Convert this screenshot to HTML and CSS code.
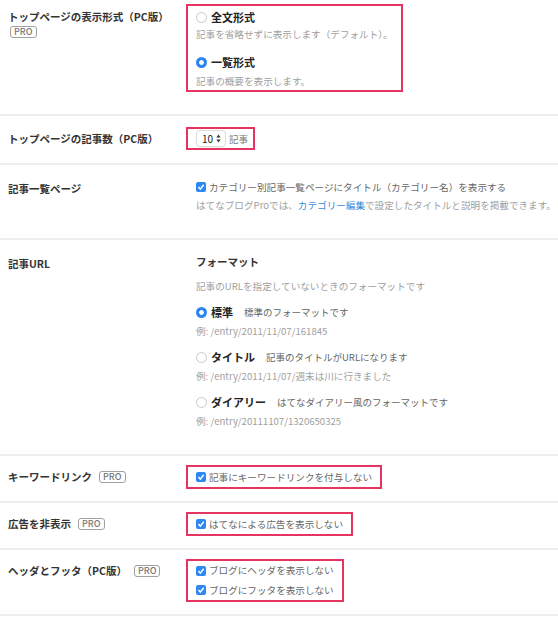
FILE: index.html
```html
<!DOCTYPE html>
<html lang="ja">
<head>
  <meta charset="UTF-8">
  <meta name="viewport" content="width=device-width, initial-scale=1.0">
  <title>詳細設定</title>
  <link rel="stylesheet" href="styles.css">
</head>
<body>

  <div class="settings">

    <!-- トップページの表示形式 -->
    <div class="row row-layout">
      <div class="label">
        トップページの表示形式（PC版）
        <span class="pro pro-block">PRO</span>
      </div>
      <div class="field mark layout-box">
        <div class="option"><span class="radio"></span><span class="opt-title">全文形式</span></div>
        <div class="note">記事を省略せずに表示します（デフォルト）。</div>
        <div class="option option-next"><span class="radio checked"></span><span class="opt-title">一覧形式</span></div>
        <div class="note note-after">記事の概要を表示します。</div>
      </div>
    </div>

    <!-- 記事数 -->
    <div class="row row-count">
      <div class="label">トップページの記事数（PC版）</div>
      <div class="field mark count-box">
        <span class="stepper">
          <span class="num">10</span>
          <svg class="arrows" viewBox="0 0 5 9"><path d="M2.5 0.5 L4.6 3.6 L0.4 3.6 Z M2.5 8.5 L4.6 5.4 L0.4 5.4 Z" fill="#333"/></svg>
        </span>
        <span class="unit">記事</span>
      </div>
    </div>

    <!-- 記事一覧ページ -->
    <div class="row">
      <div class="label">記事一覧ページ</div>
      <div class="field">
        <div class="check">
          <svg class="checkbox" viewBox="0 0 10 10"><rect width="10" height="10" rx="2" fill="#2c88f2"/><path d="M2.4 5.1 L4.3 7.1 L7.7 2.8" stroke="#fff" stroke-width="1.5" fill="none"/></svg>
          カテゴリー別記事一覧ページにタイトル（カテゴリー名）を表示する
        </div>
        <div class="note note-tight">はてなブログProでは、<a class="link">カテゴリー編集</a>で設定したタイトルと説明を掲載できます。</div>
      </div>
    </div>

    <!-- 記事URL -->
    <div class="row">
      <div class="label">記事URL</div>
      <div class="field">
        <div class="sub-head">フォーマット</div>
        <div class="note note-desc">記事のURLを指定していないときのフォーマットです</div>

        <div class="option option-url"><span class="radio checked"></span><span class="opt-title">標準</span><span class="opt-desc">標準のフォーマットです</span></div>
        <div class="note example">例: /entry/2011/11/07/161845</div>

        <div class="option option-url"><span class="radio"></span><span class="opt-title">タイトル</span><span class="opt-desc">記事のタイトルがURLになります</span></div>
        <div class="note example">例: /entry/2011/11/07/週末は川に行きました</div>

        <div class="option option-url"><span class="radio"></span><span class="opt-title">ダイアリー</span><span class="opt-desc">はてなダイアリー風のフォーマットです</span></div>
        <div class="note example">例: /entry/20111107/1320650325</div>
      </div>
    </div>

    <!-- キーワードリンク -->
    <div class="row row-flag">
      <div class="label">キーワードリンク<span class="pro">PRO</span></div>
      <div class="field mark flag-box">
        <div class="check">
          <svg class="checkbox" viewBox="0 0 10 10"><rect width="10" height="10" rx="2" fill="#2c88f2"/><path d="M2.4 5.1 L4.3 7.1 L7.7 2.8" stroke="#fff" stroke-width="1.5" fill="none"/></svg>
          記事にキーワードリンクを付与しない
        </div>
      </div>
    </div>

    <!-- 広告 -->
    <div class="row row-flag">
      <div class="label">広告を非表示<span class="pro">PRO</span></div>
      <div class="field mark flag-box">
        <div class="check">
          <svg class="checkbox" viewBox="0 0 10 10"><rect width="10" height="10" rx="2" fill="#2c88f2"/><path d="M2.4 5.1 L4.3 7.1 L7.7 2.8" stroke="#fff" stroke-width="1.5" fill="none"/></svg>
          はてなによる広告を表示しない
        </div>
      </div>
    </div>

    <!-- ヘッダとフッタ -->
    <div class="row row-flag">
      <div class="label">ヘッダとフッタ（PC版）<span class="pro">PRO</span></div>
      <div class="field mark flag-box">
        <div class="check">
          <svg class="checkbox" viewBox="0 0 10 10"><rect width="10" height="10" rx="2" fill="#2c88f2"/><path d="M2.4 5.1 L4.3 7.1 L7.7 2.8" stroke="#fff" stroke-width="1.5" fill="none"/></svg>
          ブログにヘッダを表示しない
        </div>
        <div class="check">
          <svg class="checkbox" viewBox="0 0 10 10"><rect width="10" height="10" rx="2" fill="#2c88f2"/><path d="M2.4 5.1 L4.3 7.1 L7.7 2.8" stroke="#fff" stroke-width="1.5" fill="none"/></svg>
          ブログにフッタを表示しない
        </div>
      </div>
    </div>

  </div>

</body>
</html>
```

FILE: styles.css
```css
body {
  margin: 0;
  font-family: "Noto Sans CJK JP", sans-serif;
  color: #333;
  background-color: #fff;
  overflow-x: hidden;
}

.row {
  display: flex;
  align-items: flex-start;
  padding: 11px 0 23px;
  border-bottom: 2px solid #eeeeee;
}

.label {
  width: 178px;
  flex-shrink: 0;
  padding: 4px 0 0 8px;
  font-size: 10.5px;
  line-height: 18px;
  font-weight: bold;
  color: #333;
  white-space: nowrap;
}

.pro {
  display: inline-block;
  margin-left: 7px;
  padding: 0 3px;
  border: 1px solid #a0a0a0;
  border-radius: 3px;
  font-size: 9px;
  line-height: 10px;
  font-weight: 500;
  color: #777;
  vertical-align: 1px;
}

.pro-block {
  display: block;
  width: fit-content;
  margin-left: 2px;
}

.field {
  border: 2px solid transparent;
  padding: 0 8px;
}

/* red highlight frame */
.mark {
  border-color: #e63462;
}

.option {
  display: flex;
  align-items: center;
  line-height: 18px;
  white-space: nowrap;
}

.radio {
  width: 11px;
  height: 11px;
  box-sizing: border-box;
  border: 1px solid #c8c8c8;
  border-radius: 50%;
  margin-right: 4px;
  background-color: #fff;
}

.radio.checked {
  border: none;
  background: radial-gradient(circle, #fff 0 2px, #2a86f3 2.6px);
}

.opt-title {
  font-size: 11px;
  font-weight: bold;
  color: #222;
}

.opt-desc {
  margin-left: 11px;
  font-size: 9.5px;
  color: #666;
}

.note {
  font-size: 9.6px;
  line-height: 16px;
  color: #a0a0a0;
  white-space: nowrap;
}

.link {
  color: #3a8ad6;
  text-decoration: none;
}

.check {
  display: flex;
  align-items: center;
  font-size: 9.6px;
  line-height: 20px;
  color: #666;
  white-space: nowrap;
}

.checkbox {
  width: 10px;
  height: 10px;
  margin-right: 3px;
  flex-shrink: 0;
}

/* row: top page layout */
.row-layout {
  padding: 4px 0 22px;
}

.layout-box {
  padding: 2px 8px 1px;
}

.option-next {
  margin-top: 11px;
}

.note-after {
  margin-top: 2px;
}

/* row: entry count */
.row-count {
  padding: 11px 0 13px;
}

.row-count .label {
  padding-top: 3px;
}

.count-box {
  display: flex;
  align-items: center;
  padding: 1px 5px 1px 8px;
}

.stepper {
  display: flex;
  align-items: center;
  justify-content: flex-end;
  gap: 3px;
  width: 30px;
  height: 17px;
  box-sizing: border-box;
  padding-right: 4px;
  border: 1px solid #dcdcdc;
  border-radius: 4px;
  box-shadow: 0 1px 1px rgba(0, 0, 0, 0.05);
  font-size: 10px;
  color: #222;
}

.arrows {
  width: 5px;
  height: 9px;
}

.unit {
  margin-left: 3px;
  font-size: 9.5px;
  color: #777;
}

/* row: category list */
.row .field > .check:first-child {
  line-height: 18px;
}

.note-tight {
  margin-top: 1px;
}

/* row: URL format */
.sub-head {
  font-size: 10.5px;
  line-height: 18px;
  font-weight: bold;
  color: #333;
}

.note-desc {
  margin-top: 7px;
}

.option-url {
  margin-top: 9px;
}

.example {
  margin-top: 2px;
}

/* rows with a single flag */
.row-flag {
  padding: 9px 0 12px;
}

.row-flag .label {
  padding-top: 3px;
}

.flag-box .check,
.row .flag-box > .check:first-child {
  line-height: 20px;
}

.row-flag:last-child .flag-box > .check:first-child {
  line-height: 19px;
}
```
